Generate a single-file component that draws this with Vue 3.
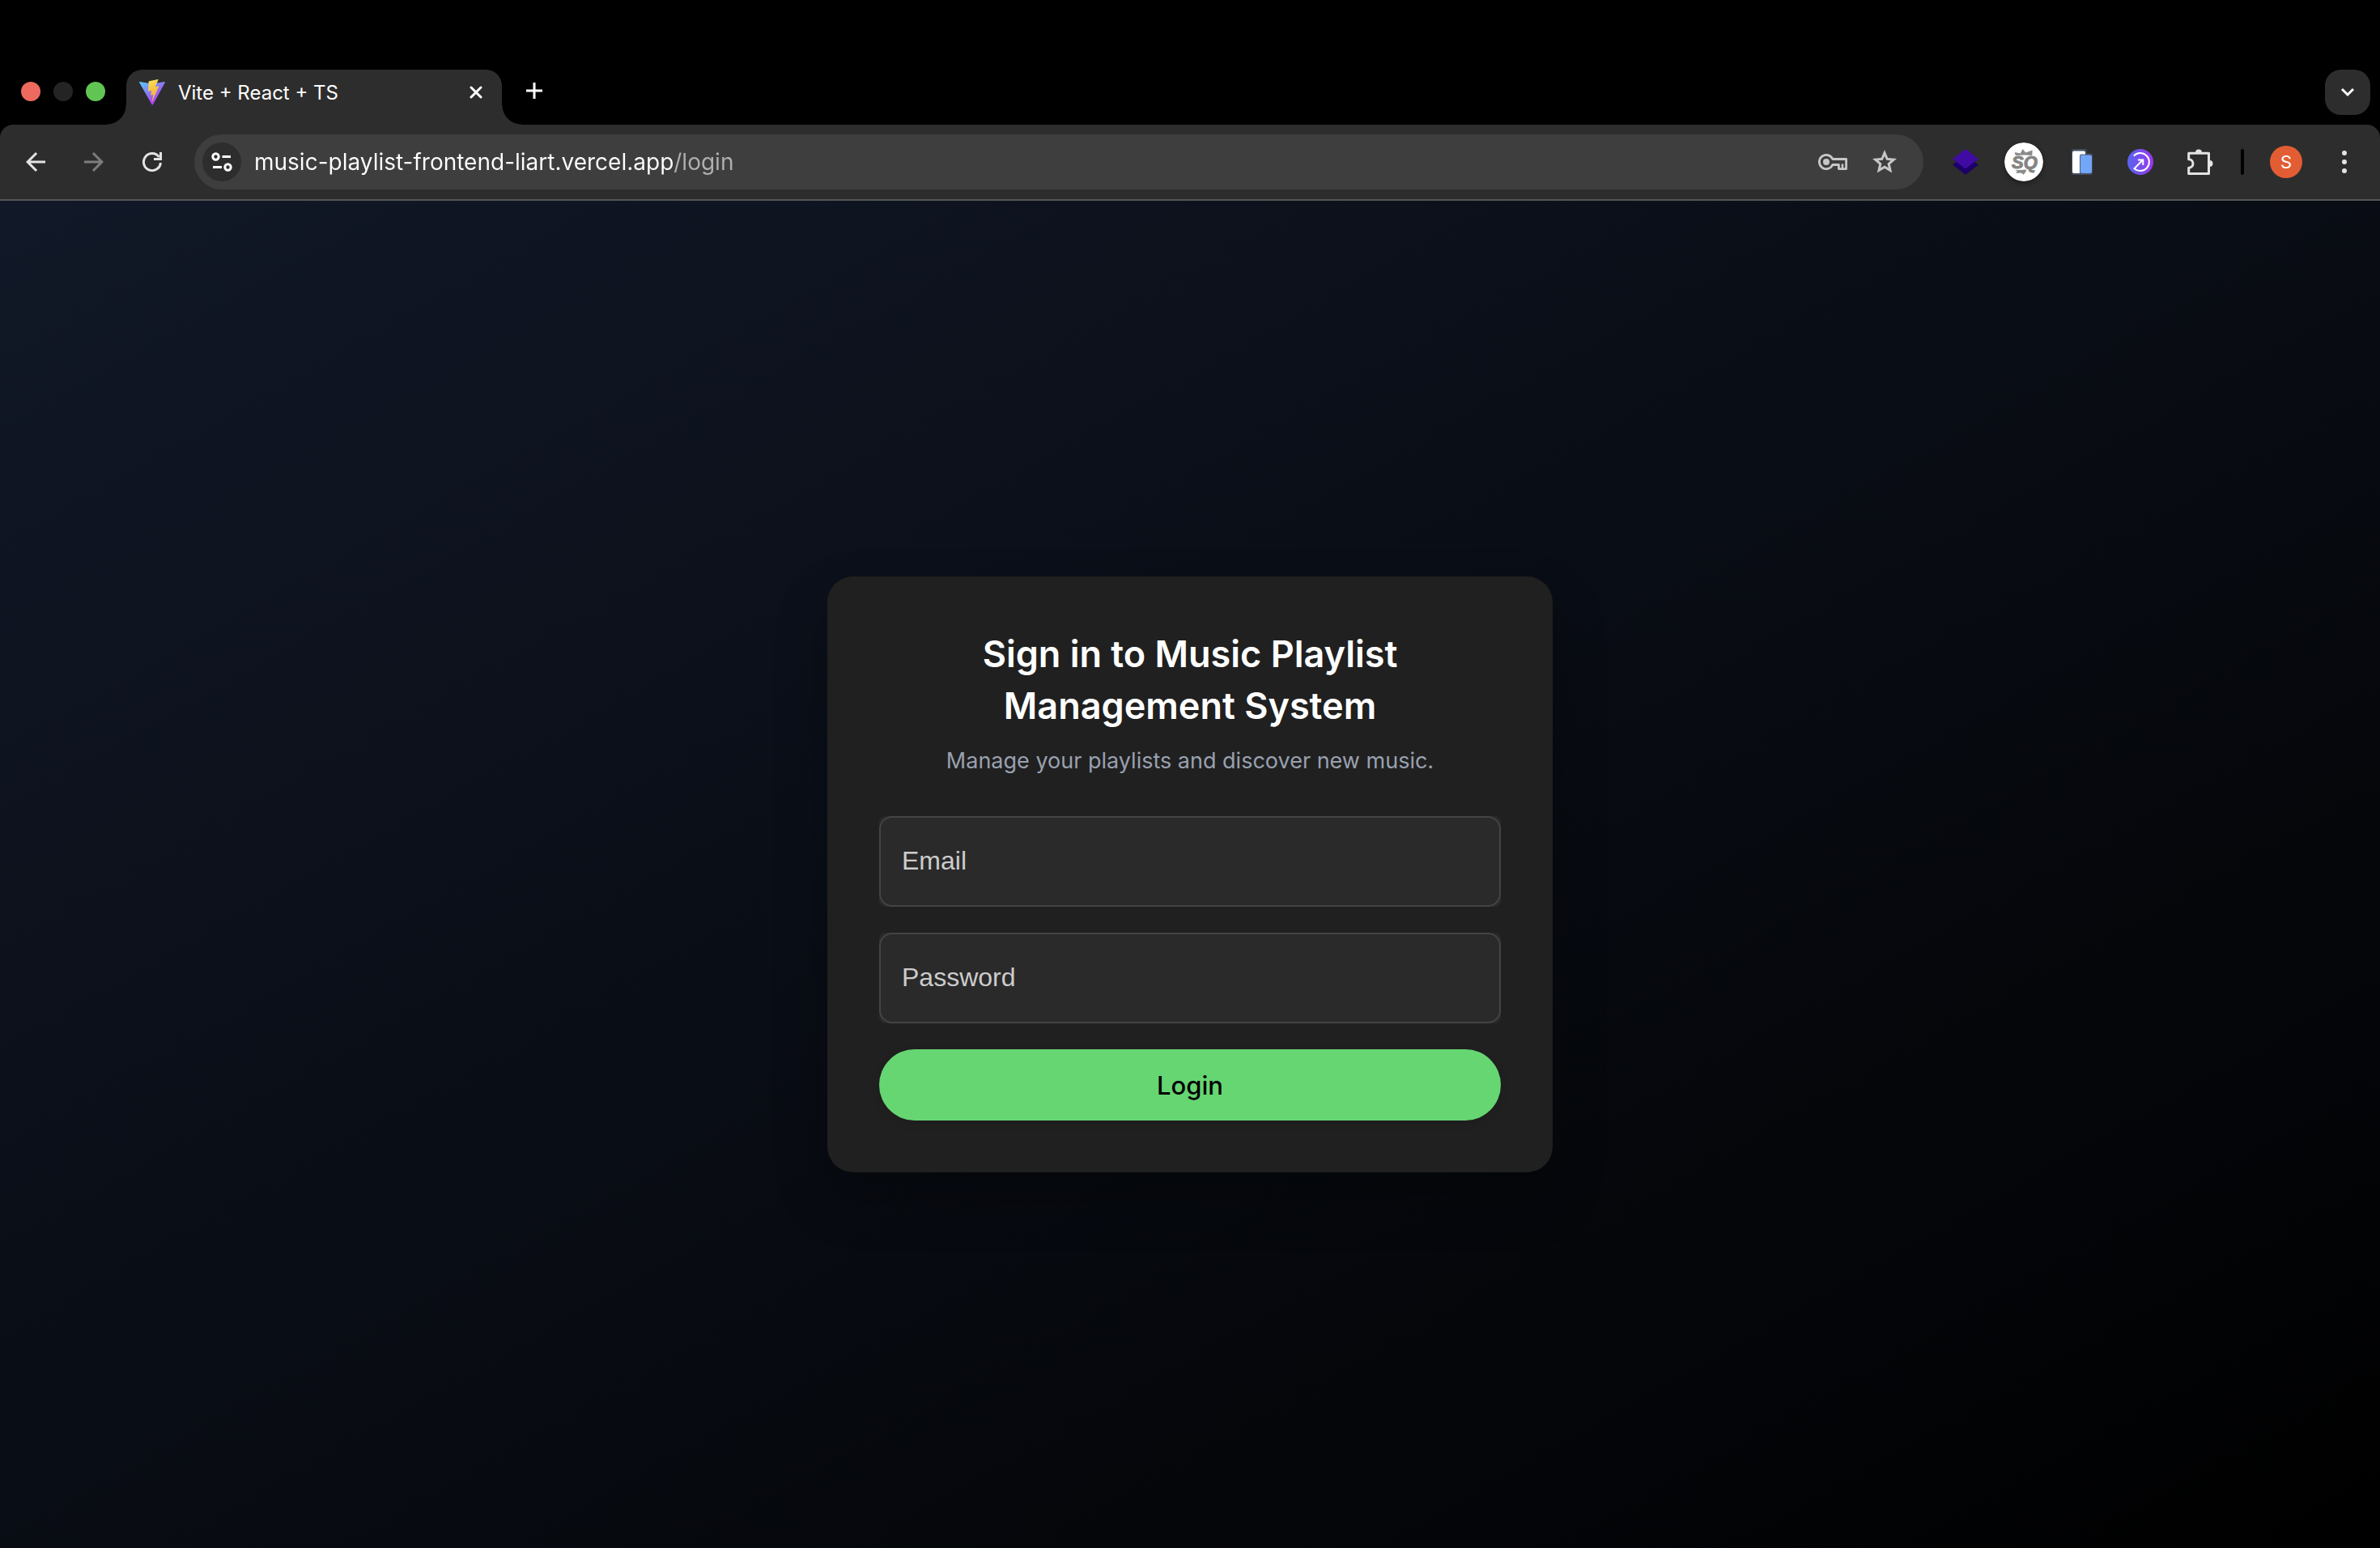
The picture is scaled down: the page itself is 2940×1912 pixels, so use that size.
<script setup>
import { ref } from 'vue'

const address = ref('music-playlist-frontend-liart.vercel.app/login')
const email = ref('')
const password = ref('')
</script>

<template>
  <div class="window">
    <header>
      <div class="tab-strip">
        <div class="lights">
          <button class="light close" aria-label="Close window"></button>
          <button class="light minimize" aria-label="Minimize window"></button>
          <button class="light expand" aria-label="Expand window"></button>
        </div>
        <div class="tab">
          <svg class="favicon" viewBox="0 0 32 32" aria-hidden="true">
            <defs>
              <linearGradient id="vite-body" x1="0" y1="0.1" x2="0.6" y2="0.9">
                <stop offset="0" stop-color="#5cc4f7" />
                <stop offset="1" stop-color="#b23bf5" />
              </linearGradient>
              <linearGradient id="vite-bolt" x1="0.4" y1="0" x2="0.6" y2="1">
                <stop offset="0" stop-color="#fbdf5c" />
                <stop offset="0.3" stop-color="#f8cc4a" />
                <stop offset="1" stop-color="#f2a541" />
              </linearGradient>
            </defs>
            <path d="M31.8 4.1 17 31.2a.8.8 0 0 1-1.4 0L.2 4.1c-.4-.7.2-1.4.9-1.2L16 5.5l14.900-2.600c.7-.1 1.300.6.9 1.200z" fill="url(#vite-body)" />
            <path d="M23.200 0 12 2.300c-.2 0-.3.2-.3.4L11 14.300c0 .3.2.5.5.4l3.100-.7c.3-.1.6.2.5.5l-.9 4.600c-.1.3.2.6.5.5l2-.6c.3-.1.6.200.5.5l-1.500 7.200c-.1.5.500.7.7.3l7.800-18.200c.2-.3-.1-.6-.4-.5l-3.200.6c-.3.1-.6-.2-.5-.5l3.500-7.900c.1-.3-.1-.6-.4-.5z" fill="url(#vite-bolt)" />
          </svg>
          <span class="tab-title">Vite + React + TS</span>
          <button class="tab-close" aria-label="Close tab">
            <svg width="16" height="16" viewBox="0 0 16 16"><path d="M2 2l12 12M14 2l-12 12" stroke="#fff" stroke-width="3" stroke-linecap="round" /></svg>
          </button>
        </div>
        <button class="new-tab" aria-label="New tab">
          <svg width="20" height="20" viewBox="0 0 20 20"><path d="M10 0v20M0 10h20" stroke="#fff" stroke-width="3" /></svg>
        </button>
        <button class="tab-search" aria-label="Search tabs">
          <svg width="18" height="12" viewBox="0 0 18 12"><path d="M2 2l7 7 7-7" fill="none" stroke="#fff" stroke-width="3" /></svg>
        </button>
      </div>

      <div class="toolbar">
        <nav class="nav-buttons">
          <button class="tool" aria-label="Back">
            <svg width="36" height="36" viewBox="0 0 24 24" fill="#e3e3e3"><path d="m7.825 13 5.600 5.600L12 20l-8-8 8-8 1.425 1.400L7.825 11H20v2z" /></svg>
          </button>
          <button class="tool" aria-label="Forward">
            <svg width="36" height="36" viewBox="0 0 24 24" fill="#7d7d7d"><path d="M16.175 13H4v-2h12.175l-5.600-5.600L12 4l8 8-8 8-1.425-1.400z" /></svg>
          </button>
          <button class="tool" aria-label="Reload">
            <svg width="24" height="24" viewBox="0 0 24 24" fill="none" stroke="#e3e3e3" stroke-width="3"><path d="M22.400 13A10.500 10.500 0 1 1 20.500 6" /><path d="M22.500 0v8.500H14" /></svg>
          </button>
        </nav>

        <div class="omnibox">
          <button class="tool site-info" aria-label="View site information">
            <svg width="32" height="32" viewBox="0 0 32 32" fill="none" stroke="#fff" stroke-width="3"><circle cx="8.500" cy="9.500" r="3.700" /><path d="M16.500 9.500H27M5 22.500h11" /><circle cx="23.500" cy="22.500" r="3.700" /></svg>
          </button>
          <input v-model="address" class="address" type="text" aria-label="Address" spellcheck="false" />
          <button class="tool" aria-label="Manage passwords">
            <svg width="36" height="20" viewBox="0 0 36 20"><path d="M17.800 6.500A8.600 8.600 0 1 0 17.800 13.500H25.400V18.600H34.600V6.500Z" fill="none" stroke="#c7c7c7" stroke-width="2.800" stroke-linejoin="round" /><circle cx="10" cy="10" r="4" fill="#c7c7c7" /><path d="M30 12.500V18" stroke="#c7c7c7" stroke-width="2.600" /></svg>
          </button>
          <button class="tool" aria-label="Bookmark this tab">
            <svg width="36" height="36" viewBox="0 0 24 24" fill="#c7c7c7"><path d="m8.850 16.825 3.150-1.900 3.150 1.925-.825-3.600 2.775-2.400-3.650-.325-1.450-3.400-1.450 3.375-3.650.325 2.775 2.425zM5.825 21l1.625-7.025L2 9.250l7.200-.625L12 2l2.800 6.625 7.200.625-5.450 4.725L18.175 21 12 17.275z" /></svg>
          </button>
        </div>

        <div class="extensions">
          <button class="tool" aria-label="Layers extension">
            <svg width="32" height="32" viewBox="0 0 32 32"><path d="M16 7.500l16 12-16 12.200-16-12.200z" fill="#1b0068" /><path d="M16 0l16 12.200-16 12.200L0 12.200z" fill="#400ba3" /></svg>
          </button>
          <button class="tool" aria-label="SQ extension">
            <svg class="sq" width="48" height="48" viewBox="0 0 48 48"><circle cx="24" cy="24" r="24" fill="#fff" /><path d="M12.700 12l7 1.500 3-5.500 3.500 4.500 8.500-3-.5 6.500-9.500-.5-11 .5zM13.300 34.200l14-.7-1 3-2.800 3.200-2.500-2.300-7 .6 2-2.300z" fill="#8b8b8b" /><text x="9" y="32" fill="#858585" stroke="#858585">SQ</text></svg>
          </button>
          <button class="tool" aria-label="Clipboard extension">
            <svg width="28" height="32" viewBox="0 0 28 32"><rect x="1" y="0" width="19" height="32" rx="3" fill="#454c60" /><rect x="10" y="5.500" width="17" height="26.500" rx="3" fill="#454c60" /><rect x="2" y="2.500" width="16" height="27.500" rx="2" fill="#fff" /><path d="M11 30V8.500q0-2 2-2H18V30z" fill="#5b6275" /><rect x="12" y="7.500" width="14" height="22.500" rx="2" fill="#72a7f8" /></svg>
          </button>
          <button class="tool" aria-label="Share extension">
            <svg width="32" height="32" viewBox="0 0 32 32"><defs><linearGradient id="share"><stop offset="0" stop-color="#5865ee" /><stop offset="1" stop-color="#9836ee" /></linearGradient></defs><circle cx="16" cy="16" r="16" fill="url(#share)" /><g fill="none" stroke="#fff" stroke-width="2"><path d="M7.800 8.600A11 11 0 1 1 8.500 24.200L19 13.500" /><path d="M13 13.500h6.300V20" /></g></svg>
          </button>
          <button class="tool" aria-label="Extensions">
            <svg width="36" height="32" viewBox="-4 0 36 32"><path d="M1.700 5.300H26.500V30.500H1.700V23.300A5.300 5.300 0 0 0 1.700 12.700Z" fill="none" stroke="#e3e3e3" stroke-width="3" stroke-linejoin="round" /><path d="M10 4.500a4 4 0 0 1 8 0zM27.500 14a4 4 0 0 1 0 8z" fill="#e3e3e3" /></svg>
          </button>
        </div>
        <span class="separator"></span>
        <button class="avatar" aria-label="Profile">S</button>
        <button class="tool menu" aria-label="Browser menu">
          <svg width="6" height="28" viewBox="0 0 6 28" fill="#e3e3e3"><circle cx="3" cy="3" r="3" /><circle cx="3" cy="14" r="3" /><circle cx="3" cy="25" r="3" /></svg>
        </button>
      </div>
    </header>

    <main>
      <section class="card">
        <h2>Sign in to Music Playlist Management System</h2>
        <p>Manage your playlists and discover new music.</p>
        <form @submit.prevent>
          <div class="field">
            <input id="email" v-model="email" type="email" />
            <label for="email">Email</label>
          </div>
          <div class="field">
            <input id="password" v-model="password" type="password" />
            <label for="password">Password</label>
          </div>
          <button class="login" type="submit">Login</button>
        </form>
      </section>
    </main>
  </div>
</template>

<style>
body {
  margin: 0;
  background: #000;
}
</style>

<style scoped>
.window {
  display: flex;
  flex-direction: column;
  min-height: 100vh;
  background: #000;
  color: #fff;
  font-family: Inter, "Liberation Sans", sans-serif;
}

button {
  display: flex;
  align-items: center;
  justify-content: center;
  flex: none;
  margin: 0;
  padding: 0;
  border: 0;
  background: none;
  color: inherit;
  font-family: inherit;
}

.tab-strip {
  display: flex;
  align-items: flex-start;
  padding: 86px 12px 0 26px;
}

.lights {
  display: flex;
  align-items: center;
  gap: 16px;
  height: 54px;
  margin-right: 26px;
}

.light {
  width: 24px;
  height: 24px;
  border-radius: 50%;
}

.close {
  background: #ed6a5e;
}

.minimize {
  background: #242424;
}

.expand {
  background: #61c554;
}

.tab {
  position: relative;
  display: flex;
  align-items: center;
  gap: 16px;
  width: 464px;
  height: 68px;
  padding: 0 16px 12px;
  box-sizing: border-box;
  border-radius: 20px 20px 0 0;
  background: #2d2d2d;
}

.tab::before,
.tab::after {
  content: "";
  position: absolute;
  bottom: 0;
  width: 24px;
  height: 24px;
}

.tab::before {
  right: 100%;
  background: radial-gradient(circle at 0 0, transparent 23px, #2d2d2d 24px);
}

.tab::after {
  left: 100%;
  background: radial-gradient(circle at 100% 0, transparent 23px, #2d2d2d 24px);
}

.favicon {
  width: 32px;
  height: 32px;
}

.tab-title {
  flex: 1;
  font-size: 24px;
}

.tab-close {
  width: 32px;
  height: 32px;
}

.new-tab {
  width: 56px;
  height: 52px;
  margin-left: 12px;
}

.tab-search {
  width: 56px;
  height: 56px;
  margin-left: auto;
  border-radius: 20px;
  background: #2d2d2d;
}

.toolbar {
  display: flex;
  align-items: center;
  padding: 12px 20px;
  border-bottom: 2px solid #555;
  border-radius: 16px 16px 0 0;
  background: #2d2d2d;
}

.nav-buttons,
.extensions {
  display: flex;
  gap: 24px;
}

.tool {
  width: 48px;
  height: 48px;
}

.omnibox {
  display: flex;
  align-items: center;
  gap: 16px;
  flex: 1;
  height: 68px;
  margin: 0 28px;
  padding: 0 24px 0 10px;
  box-sizing: border-box;
  border-radius: 34px;
  background: #3e3e3e;
}

.site-info {
  border-radius: 50%;
  background: #2d2d2d;
}

/* the host is white, the path after it is dimmed */
.address {
  flex: 1;
  min-width: 0;
  padding: 0;
  border: 0;
  outline: 0;
  background: linear-gradient(90deg, #fff 518px, #b0b0b0 518px);
  background-clip: text;
  color: transparent;
  caret-color: #fff;
  font-family: inherit;
  font-size: 28px;
  line-height: 40px;
}

.sq {
  border-radius: 50%;
  box-shadow: 0 2px 6px rgba(0, 0, 0, 0.4);
}

.sq text {
  font: italic bold 22px "Liberation Sans", sans-serif;
}

.separator {
  width: 4px;
  height: 32px;
  margin: 0 32px 0 28px;
  border-radius: 2px;
  background: #000;
}

.avatar {
  width: 40px;
  height: 40px;
  border-radius: 50%;
  background: #e25d33;
  font-size: 22px;
}

.menu {
  margin-left: 28px;
}

main {
  display: flex;
  align-items: center;
  justify-content: center;
  flex: 1;
  background: linear-gradient(to bottom right, #111827, #000);
}

.card {
  width: 896px;
  padding: 64px;
  box-sizing: border-box;
  border-radius: 32px;
  background: #202020;
  box-shadow: 0 32px 64px rgba(0, 0, 0, 0.25);
  text-align: center;
}

h2 {
  max-width: 640px;
  margin: 0 auto 16px;
  font-size: 45px;
  font-weight: 600;
  line-height: 64px;
}

p {
  margin: 0 0 48px;
  color: #99a1af;
  font-size: 27px;
  line-height: 40px;
}

form {
  display: flex;
  flex-direction: column;
  gap: 32px;
}

.field {
  position: relative;
  border-radius: 8px;
  background: #2a2a2a;
}

.field input {
  display: block;
  width: 100%;
  height: 112px;
  padding: 0 28px;
  box-sizing: border-box;
  border: 2px solid #444;
  border-radius: 16px;
  outline: 0;
  background: transparent;
  color: #fff;
  font: 32px "Liberation Sans", Arial, sans-serif;
}

.field label {
  position: absolute;
  top: 32px;
  left: 28px;
  color: #ccc;
  font: 32px/46px "Liberation Sans", Arial, sans-serif;
  pointer-events: none;
}

.login {
  height: 88px;
  border-radius: 44px;
  background: #66d672;
  box-shadow: 0 4px 12px rgba(0, 0, 0, 0.1);
  color: #000;
  font-size: 31px;
  font-weight: 500;
}
</style>
